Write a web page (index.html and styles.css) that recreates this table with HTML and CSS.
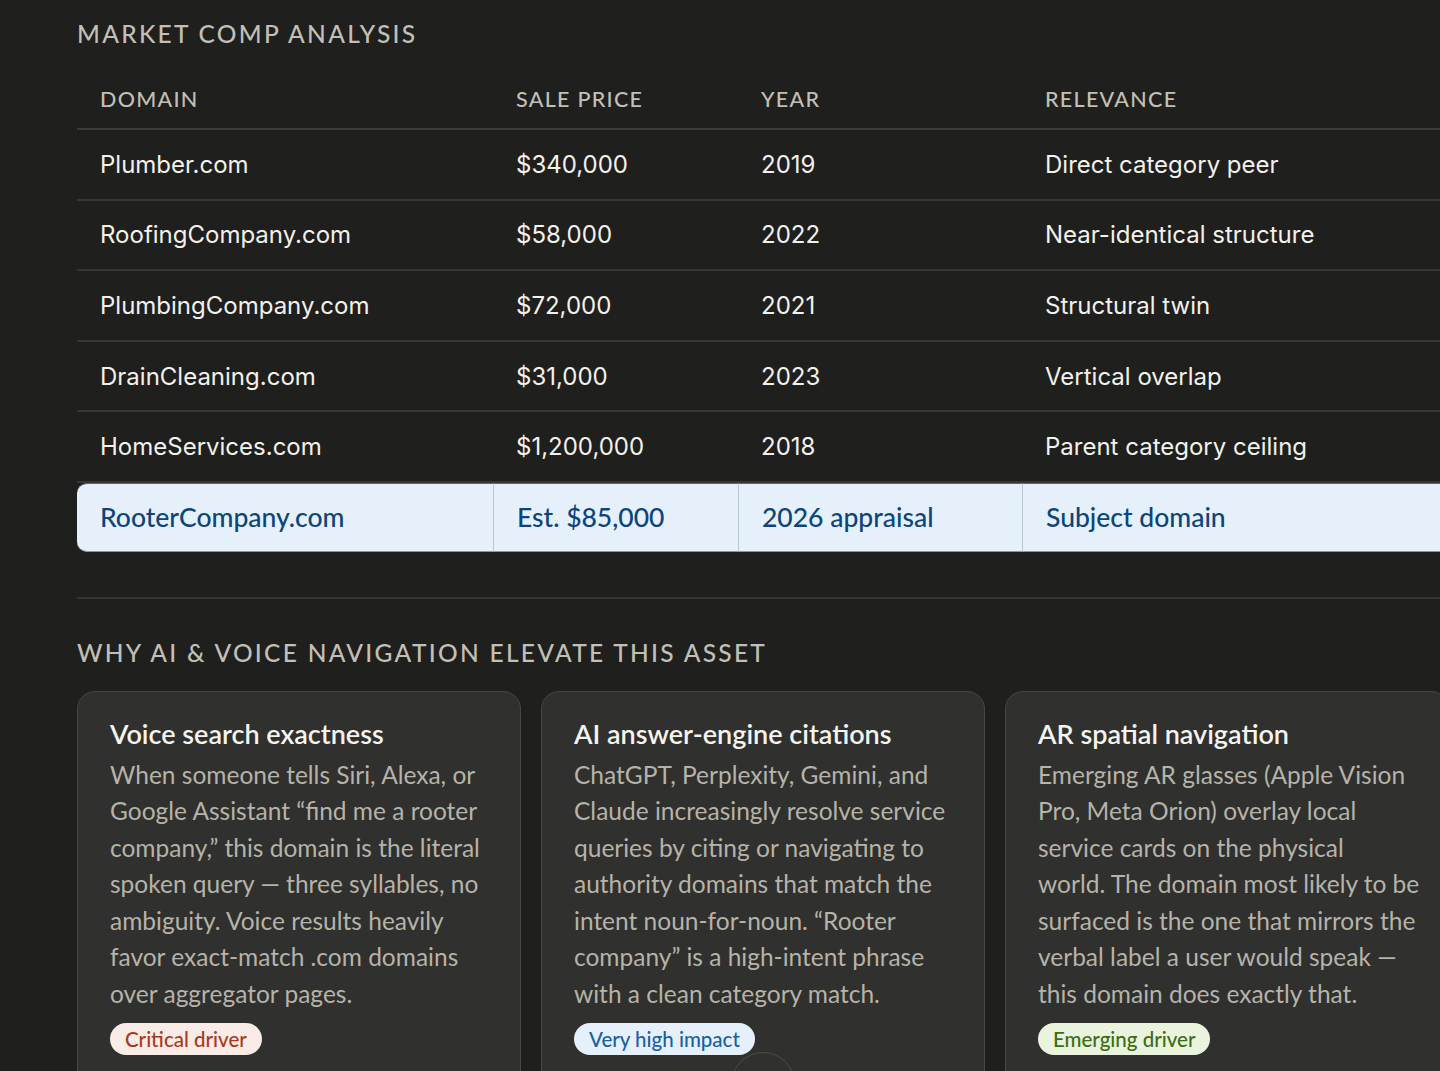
FILE: index.html
```html
<!DOCTYPE html>
<html lang="en">
<head>
<meta charset="utf-8">
<title>Market comp analysis</title>
<link rel="stylesheet" href="styles.css">
</head>
<body>
<main class="page">
  <h2 class="section-title">MARKET COMP ANALYSIS</h2>
  <table class="comps">
    <colgroup>
      <col class="c1"><col class="c2"><col class="c3"><col class="c4">
    </colgroup>
    <thead>
      <tr><th>DOMAIN</th><th>SALE PRICE</th><th>YEAR</th><th>RELEVANCE</th></tr>
    </thead>
    <tbody>
      <tr><td>Plumber.com</td><td>$340,000</td><td>2019</td><td>Direct category peer</td></tr>
      <tr><td>RoofingCompany.com</td><td>$58,000</td><td>2022</td><td>Near-identical structure</td></tr>
      <tr><td>PlumbingCompany.com</td><td>$72,000</td><td>2021</td><td>Structural twin</td></tr>
      <tr><td>DrainCleaning.com</td><td>$31,000</td><td>2023</td><td>Vertical overlap</td></tr>
      <tr><td>HomeServices.com</td><td>$1,200,000</td><td>2018</td><td>Parent category ceiling</td></tr>
      <tr class="subject"><td>RooterCompany.com</td><td>Est. $85,000</td><td>2026 appraisal</td><td>Subject domain</td></tr>
    </tbody>
  </table>
  <hr class="divider">
  <h2 class="section-title">WHY AI &amp; VOICE NAVIGATION ELEVATE THIS ASSET</h2>
  <div class="cards">
    <article class="card">
      <h3>Voice search exactness</h3>
      <p>When someone tells Siri, Alexa, or Google Assistant “find me a rooter company,” this domain is the literal spoken query — three syllables, no ambiguity. Voice results heavily favor exact-match .com domains over aggregator pages.</p>
      <span class="badge badge-red">Critical driver</span>
    </article>
    <article class="card">
      <h3>AI answer-engine citations</h3>
      <p>ChatGPT, Perplexity, Gemini, and Claude increasingly resolve service queries by citing or navigating to authority domains that match the intent noun-for-noun. “Rooter company” is a high-intent phrase with a clean category match.</p>
      <span class="badge badge-blue">Very high impact</span>
    </article>
    <article class="card">
      <h3>AR spatial navigation</h3>
      <p>Emerging AR glasses (Apple Vision Pro, Meta Orion) overlay local service cards on the physical<br>world. The domain most likely to be surfaced is the one that mirrors the verbal label a user would speak — this domain does exactly that.</p>
      <span class="badge badge-green">Emerging driver</span>
    </article>
  </div>
</main>
<div class="scroll-btn" aria-hidden="true"></div>
</body>
</html>
```

FILE: styles.css
```css
html, body {
  margin: 0;
  padding: 0;
}
body {
  background: #1f1f1e;
  overflow: hidden;
  font-family: "Lato", "Liberation Sans", sans-serif;
  color: #f0efe9;
}
.page {
  width: 1372px;
  margin-left: 77px;
  padding-top: 18px;
}
.section-title {
  margin: 0;
  font-family: "Lato", sans-serif;
  font-weight: 500;
  font-size: 24.5px;
  line-height: 32px;
  letter-spacing: 2.3px;
  color: #c2c0b6;
}
.comps {
  margin-top: 19px;
  width: 1372px;
  border-collapse: separate;
  border-spacing: 0;
  table-layout: fixed;
}
.c1 { width: 416px; }
.c2 { width: 245px; }
.c3 { width: 284px; }
.c4 { width: 427px; }
.comps th {
  height: 59px;
  padding: 0 0 0 23px;
  text-align: left;
  font-family: "Lato", sans-serif;
  font-weight: 500;
  font-size: 21.5px;
  letter-spacing: 0.06em;
  color: #c2c0b6;
  border-bottom: 2px solid #3a3a38;
}
.comps td {
  height: 68.6px;
  padding: 0 0 0 23px;
  font-family: "Inter", "Liberation Sans", sans-serif;
  font-size: 24px;
  color: #f2f1ec;
  border-bottom: 2px solid #363634;
}
.comps .subject td {
  font-family: "Lato", sans-serif;
  font-weight: 500;
  font-size: 26.5px;
  height: 67px;
  background: #e6f0fb;
  color: #0c447c;
  border-top: 1px solid #5c6670;
  border-bottom: 1.5px solid #8a96a3;
  border-left: 1px solid #b7c5d3;
}
.comps .subject td:first-child {
  border-left: none;
  border-radius: 10px 0 0 10px;
}
.divider {
  margin: 45px 0 38px;
  border: none;
  border-top: 2px solid #353533;
}
.cards {
  margin-top: 22px;
  display: grid;
  grid-template-columns: 444px 444px 444px;
  gap: 20px;
}
.card {
  background: #30302e;
  border: 1.5px solid #464643;
  border-radius: 18px;
  padding: 26px 25px 40px 32px;
}
.card h3 {
  margin: 0;
  font-family: "Lato", sans-serif;
  font-weight: 600;
  font-size: 27px;
  line-height: 32px;
  color: #f5f4ef;
}
.card p {
  margin: 7px 0 11px;
  font-family: "Lato", sans-serif;
  font-size: 24.5px;
  line-height: 36.5px;
  color: #b6b3a9;
}
.badge {
  display: inline-block;
  height: 32px;
  line-height: 32px;
  padding: 0 15px;
  border-radius: 16px;
  font-family: "Lato", sans-serif;
  font-size: 20.5px;
  font-weight: 500;
}
.badge-red { background: #f9ebe6; color: #a8391c; }
.badge-blue { background: #e6f0fb; color: #185fa5; }
.badge-green { background: #eaf3de; color: #3b6d11; }
.scroll-btn {
  position: fixed;
  left: 731px;
  top: 1052px;
  width: 62px;
  height: 62px;
  border-radius: 50%;
  border: 1.5px solid #4d4d4a;
  background: #30302e;
}
```
